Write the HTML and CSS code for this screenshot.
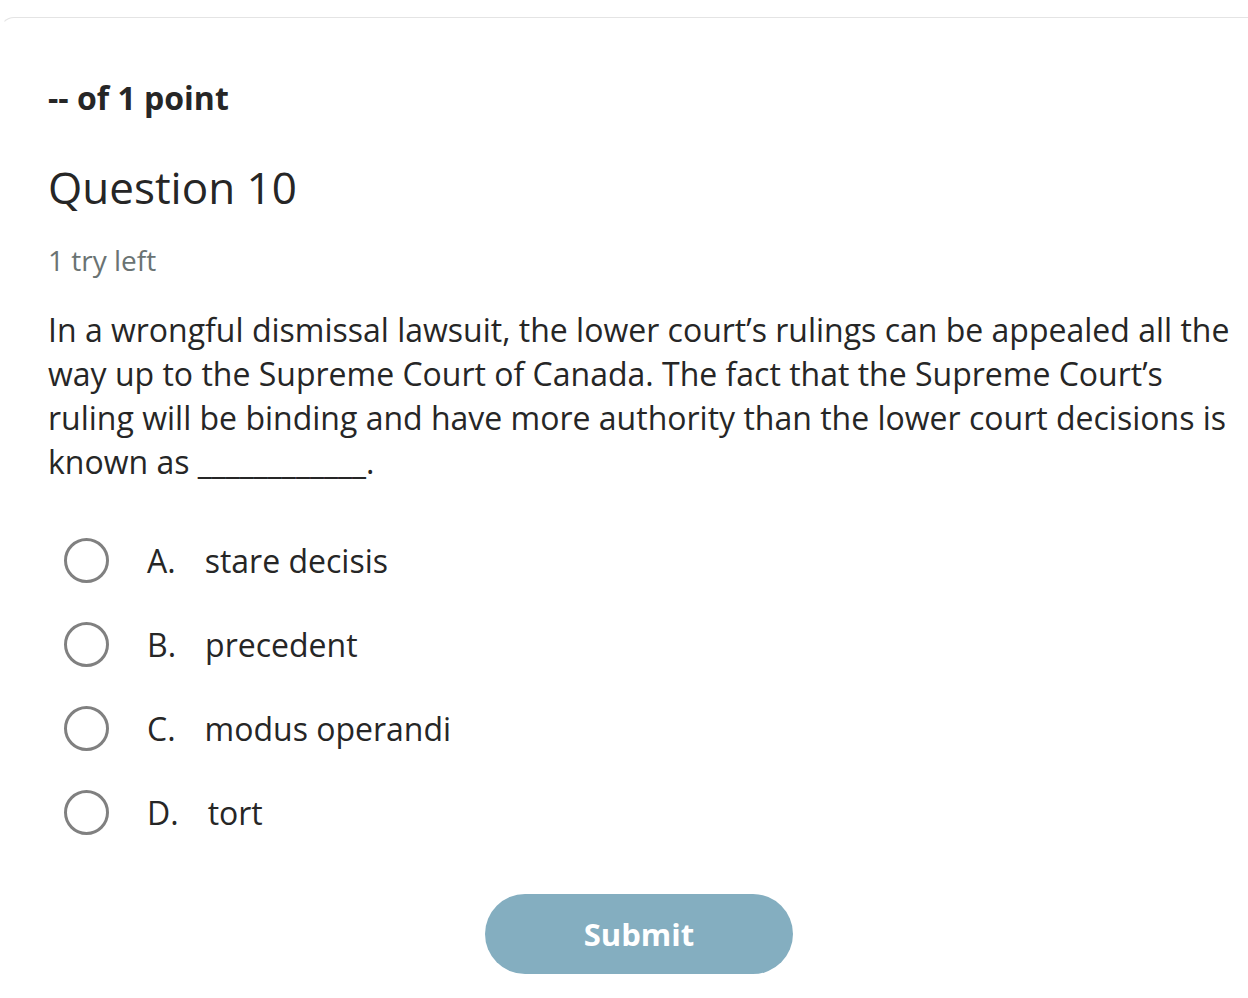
FILE: index.html
```html
<!DOCTYPE html>
<html>
<head>
<meta charset="utf-8">
<link rel="stylesheet" href="styles.css">
</head>
<body>
<div class="card">
  <div class="content">
    <div class="points">-- of 1 point</div>
    <h2 class="qtitle">Question 10</h2>
    <div class="tries">1 try left</div>
    <p class="prompt">In a wrongful dismissal lawsuit, the lower court’s rulings can be appealed all the way up to the Supreme Court of Canada. The fact that the Supreme Court’s ruling will be binding and have more authority than the lower court decisions is known as ____________.</p>
    <ul class="options">
      <li class="option"><span class="radio"></span><span class="letter">A.</span><span class="text">stare decisis</span></li>
      <li class="option"><span class="radio"></span><span class="letter">B.</span><span class="text">precedent</span></li>
      <li class="option"><span class="radio"></span><span class="letter">C.</span><span class="text">modus operandi</span></li>
      <li class="option"><span class="radio"></span><span class="letter">D.</span><span class="text">tort</span></li>
    </ul>
    <div class="actions"><button class="submit">Submit</button></div>
  </div>
</div>
</body>
</html>
```
FILE: styles.css
```css
html, body {
  margin: 0;
  padding: 0;
  background: #ffffff;
}
body {
  font-family: "Open Sans", "Noto Sans", sans-serif;
  color: #262626;
}
.card {
  margin-top: 17px;
  border-top: 1px solid #e4e4e4;
  border-left: 1px solid transparent;
  border-top-left-radius: 14px;
  min-height: 980px;
}
.content {
  width: 1182px;
  padding: 60px 0 0 47px;
}
.points {
  font-size: 32px;
  font-weight: 700;
  line-height: 40px;
}
.qtitle {
  margin: 39px 0 0;
  font-size: 44px;
  font-weight: 400;
  line-height: 60px;
}
.tries {
  margin-top: 25px;
  font-size: 28px;
  line-height: 36px;
  color: #6a7373;
}
.prompt {
  margin: 30px 0 0;
  font-size: 32px;
  line-height: 44px;
}
.options {
  list-style: none;
  margin: 34px 0 0;
  padding: 0 0 0 16px;
}
.option {
  display: flex;
  align-items: center;
  height: 84px;
  font-size: 32px;
}
.radio {
  box-sizing: border-box;
  width: 45px;
  height: 45px;
  border: 3px solid #808080;
  border-radius: 50%;
  margin-right: 38px;
  flex: none;
}
.letter {
  margin-right: 29px;
}
.actions {
  display: flex;
  justify-content: center;
  margin-top: 40px;
}
.submit {
  width: 308px;
  height: 80px;
  border: none;
  border-radius: 40px;
  background: #84aec0;
  color: #ffffff;
  font-family: "Open Sans", "Noto Sans", sans-serif;
  font-size: 31px;
  font-weight: 700;
}
```
